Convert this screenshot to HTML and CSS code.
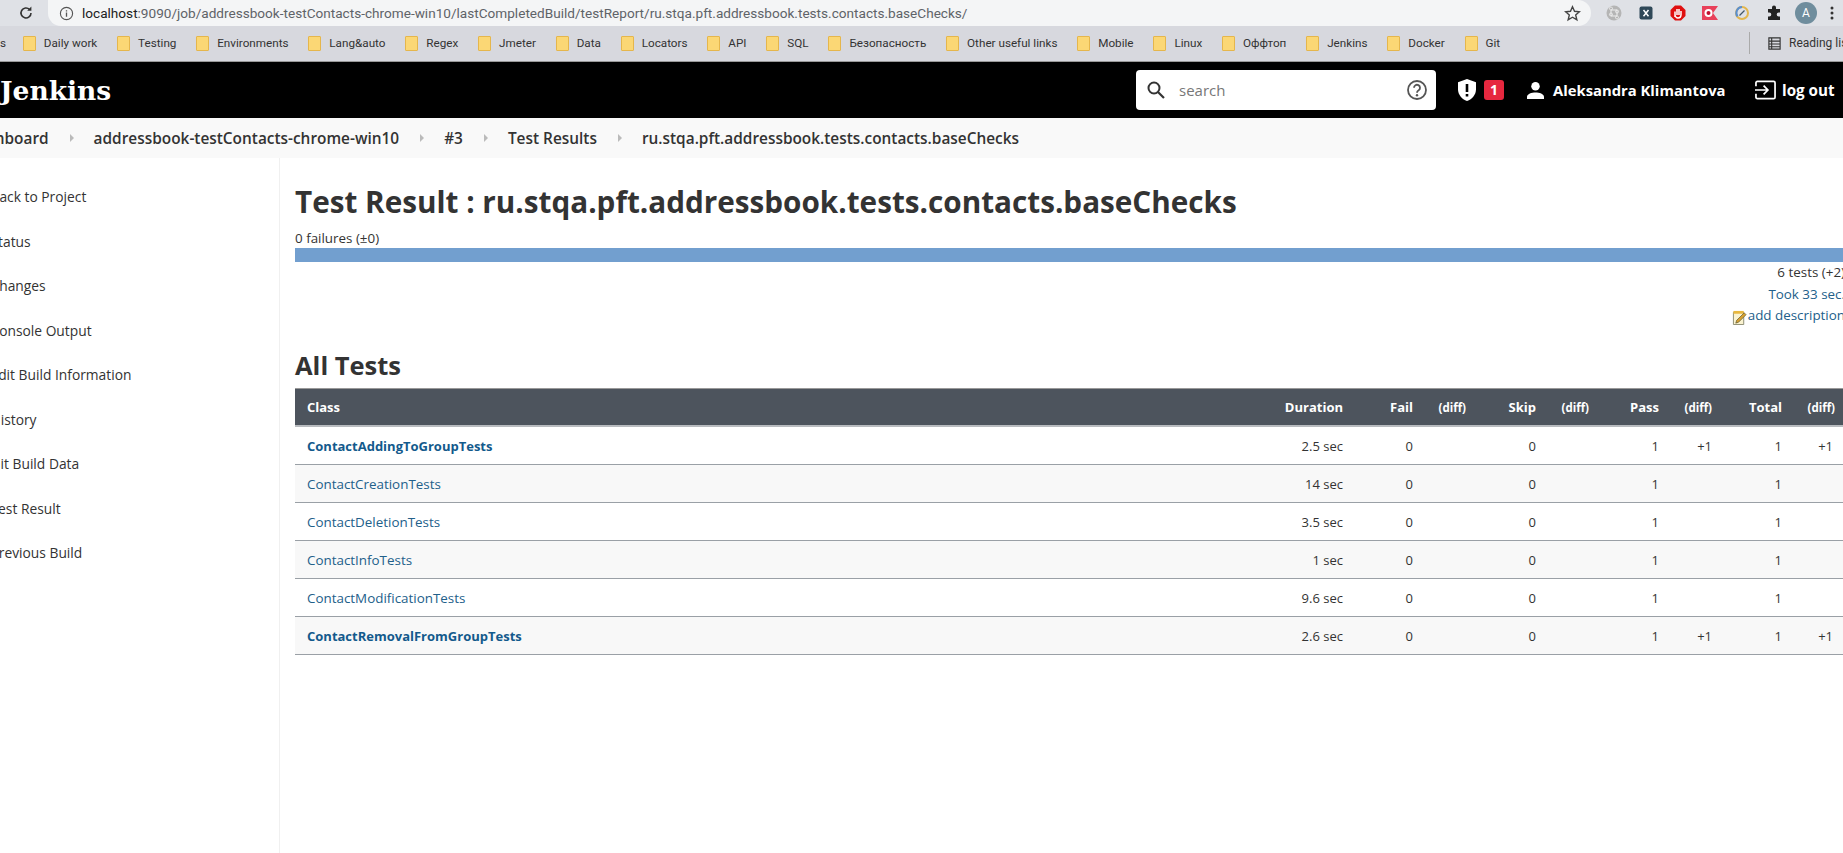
FILE: index.html
```html
<!DOCTYPE html>
<html>
<head>
<meta charset="utf-8">
<title>Test Result</title>
<link rel="stylesheet" href="styles.css">
</head>
<body>

<div class="toolbar">
	<svg class="reload" viewBox="0 0 16 16"><path d="M13 8a5 5 0 1 1-1.5-3.6" fill="none" stroke="#333" stroke-width="1.6"/><path d="M13.4 1.6v4.2H9.2z" fill="#333"/></svg>
	<div class="address">
		<svg class="info" viewBox="0 0 16 16"><circle cx="8" cy="8" r="6.5" fill="none" stroke="#555" stroke-width="1.2"/><path d="M8 7v4.4M8 4.4v1.4" stroke="#555" stroke-width="1.4"/></svg>
		<span class="host">localhost</span><span class="path">:9090/job/addressbook-testContacts-chrome-win10/lastCompletedBuild/testReport/ru.stqa.pft.addressbook.tests.contacts.baseChecks/</span>
		<svg class="star" viewBox="0 0 16 16"><path d="M8 1.6l1.9 4.3 4.6.4-3.5 3 1.1 4.6L8 11.5l-4.1 2.4L5 9.300l-3.500-3 4.600-.4z" fill="none" stroke="#444" stroke-width="1.300"/></svg>
	</div>
	<div class="exts">
		<svg class="ext" viewBox="0 0 16 16"><circle cx="8" cy="8" r="7.500" fill="#b5b5b5"/><path d="M5 5h6v6H5zM5 5a1.500 1.500 0 1 0-.1 0M11 5a1.500 1.500 0 1 0 .1 0M5 11a1.500 1.500 0 1 0-.1 0M11 11a1.500 1.500 0 1 0 .1 0" fill="none" stroke="#eee" stroke-width="1"/></svg>
		<svg class="ext" viewBox="0 0 16 16"><rect x="1.500" y="1.500" width="13" height="13" rx="2" fill="#2f4858"/><path d="M5.500 5l5 6.200M10.500 5l-5 6.200" stroke="#fff" stroke-width="1.500"/></svg>
		<svg class="ext" viewBox="0 0 16 16"><path d="M5 .5h6L15.500 5v6L11 15.500H5L.5 11V5z" fill="#e01010"/><path d="M5 12V6.500M7 10V4M9 10V4M11 10V6M5 9.500c0 2 1.500 3.500 3 3.500s3-1 3-3.500" fill="none" stroke="#fff" stroke-width="1.500"/></svg>
		<svg class="ext" viewBox="0 0 16 16"><path d="M0 1h16l-5 7 5 7H0z" fill="#e8405a"/><circle cx="6.500" cy="8" r="4" fill="#fff"/><circle cx="6.500" cy="8" r="2" fill="#c01030"/></svg>
		<svg class="ext" viewBox="0 0 16 16"><circle cx="8" cy="8" r="6" fill="none" stroke="#e3b64c" stroke-width="2"/><path d="M3.500 11.500A6 6 0 0 1 8 2" fill="none" stroke="#5a8fd0" stroke-width="2"/><path d="M5.500 10.500L10.500 5.500" stroke="#456" stroke-width="1.300"/></svg>
		<svg class="ext" viewBox="0 0 16 16"><path d="M6 2.500a2 2 0 0 1 4 0V4h4v3.500h-1.300a2 2 0 0 0 0 4H14V15H2v-3.500h1.300a2 2 0 0 0 0-4H2V4h4z" fill="#222"/></svg>
		<div class="avatar">A</div>
		<svg class="dots" viewBox="0 0 4 16"><circle cx="2" cy="3" r="1.500"/><circle cx="2" cy="8" r="1.500"/><circle cx="2" cy="13" r="1.500"/></svg>
	</div>
</div>

<div class="bookmarks">
	<span class="bm-cut">s</span>
	<span class="bm"><i class="folder"></i>Daily work</span>
	<span class="bm"><i class="folder"></i>Testing</span>
	<span class="bm"><i class="folder"></i>Environments</span>
	<span class="bm"><i class="folder"></i>Lang&amp;auto</span>
	<span class="bm"><i class="folder"></i>Regex</span>
	<span class="bm"><i class="folder"></i>Jmeter</span>
	<span class="bm"><i class="folder"></i>Data</span>
	<span class="bm"><i class="folder"></i>Locators</span>
	<span class="bm"><i class="folder"></i>API</span>
	<span class="bm"><i class="folder"></i>SQL</span>
	<span class="bm"><i class="folder"></i>Безопасность</span>
	<span class="bm"><i class="folder"></i>Other useful links</span>
	<span class="bm"><i class="folder"></i>Mobile</span>
	<span class="bm"><i class="folder"></i>Linux</span>
	<span class="bm"><i class="folder"></i>Оффтоп</span>
	<span class="bm"><i class="folder"></i>Jenkins</span>
	<span class="bm"><i class="folder"></i>Docker</span>
	<span class="bm"><i class="folder"></i>Git</span>
	<span class="reading">
		<svg class="reading-icon" viewBox="0 0 16 16"><path d="M2 2h12v12H2zM5 2v12M2 5.500h12M2 8.500h12M2 11.500h12" fill="none" stroke="#333" stroke-width="1.200"/></svg>
		Reading list
	</span>
</div>

<header class="page-header">
	<div class="logo">Jenkins</div>
	<div class="search">
		<svg class="search-icon" viewBox="0 0 18 18"><circle cx="7" cy="7" r="5.500" fill="none" stroke="#333" stroke-width="2"/><path d="M11 11l6 6" stroke="#333" stroke-width="2.200"/></svg>
		<span class="search-text">search</span>
		<svg class="help-icon" viewBox="0 0 20 20"><circle cx="10" cy="10" r="9" fill="none" stroke="#555" stroke-width="1.800"/><path d="M7 7.800a3 3 0 1 1 4.600 2.500c-1 .6-1.600 1.200-1.600 2.400" fill="none" stroke="#555" stroke-width="1.800"/><circle cx="10" cy="15.200" r="1.200" fill="#555"/></svg>
	</div>
	<svg class="shield" viewBox="0 0 18 22"><path d="M9 0l9 3.200v7c0 5.500-3.800 9.800-9 11.800-5.200-2-9-6.300-9-11.800v-7z" fill="#fff"/><path d="M9 5v8M9 15v2.500" stroke="#000" stroke-width="2.600"/></svg>
	<span class="badge">1</span>
	<svg class="user-icon" viewBox="0 0 18 18"><circle cx="9" cy="4.500" r="4.500" fill="#fff"/><path d="M0 18v-2.500C0 12.500 5 11 9 11s9 1.500 9 4.500V18z" fill="#fff"/></svg>
	<span class="user-name">Aleksandra Klimantova</span>
	<svg class="logout-icon" viewBox="0 0 22 20"><path d="M1 6V2.500A1.500 1.500 0 0 1 2.500 1h17A1.500 1.500 0 0 1 21 2.500v15a1.500 1.500 0 0 1-1.500 1.500h-17A1.500 1.500 0 0 1 1 17.500V14" fill="none" stroke="#fff" stroke-width="1.800"/><path d="M0 10h13M9 5.500l4.500 4.500L9 14.500" fill="none" stroke="#fff" stroke-width="1.800"/></svg>
	<span class="logout">log out</span>
</header>

<nav class="crumbs">
	<span class="crumb">Dashboard</span><i class="sep"></i>
	<span class="crumb">addressbook-testContacts-chrome-win10</span><i class="sep"></i>
	<span class="crumb">#3</span><i class="sep"></i>
	<span class="crumb">Test Results</span><i class="sep"></i>
	<span class="crumb">ru.stqa.pft.addressbook.tests.contacts.baseChecks</span>
</nav>

<section class="main">
	<ul class="side">
		<li>Back to Project</li>
		<li>Status</li>
		<li>Changes</li>
		<li>Console Output</li>
		<li>Edit Build Information</li>
		<li>History</li>
		<li>Git Build Data</li>
		<li>Test Result</li>
		<li>Previous Build</li>
	</ul>
	<div class="content">
		<h1>Test Result : ru.stqa.pft.addressbook.tests.contacts.baseChecks</h1>
		<div class="failures">0 failures (±0)</div>
		<div class="bar"></div>
		<div class="summary">
			<div>6 tests (+2)</div>
			<div><a href="#">Took 33 sec.</a></div>
			<div class="desc">
				<svg class="note" viewBox="0 0 16 16"><path d="M1.500 2.500h11v13h-11z" fill="#fbf3d0" stroke="#8a8a70"/><path d="M1.500 1h11v3h-11z" fill="#e8b840"/><path d="M5 11l8-8 2 2-8 8-3 1z" fill="#d8a030" stroke="#553" stroke-width=".7"/></svg>
				<a href="#">add description</a>
			</div>
		</div>
		<h2>All Tests</h2>
		<table class="tests">
			<colgroup>
				<col class="col-class"><col class="col-dur">
				<col class="col-num"><col class="col-diff">
				<col class="col-num"><col class="col-diff">
				<col class="col-num"><col class="col-diff">
				<col class="col-num"><col class="col-diff">
			</colgroup>
			<thead>
				<tr><th class="left">Class</th><th>Duration</th><th>Fail</th><th class="diff">(diff)</th><th>Skip</th><th class="diff">(diff)</th><th>Pass</th><th class="diff">(diff)</th><th>Total</th><th class="diff">(diff)</th></tr>
			</thead>
			<tbody>
				<tr><td class="left"><a class="new" href="#">ContactAddingToGroupTests</a></td><td>2.5 sec</td><td>0</td><td></td><td>0</td><td></td><td>1</td><td>+1</td><td>1</td><td>+1</td></tr>
				<tr><td class="left"><a href="#">ContactCreationTests</a></td><td>14 sec</td><td>0</td><td></td><td>0</td><td></td><td>1</td><td></td><td>1</td><td></td></tr>
				<tr><td class="left"><a href="#">ContactDeletionTests</a></td><td>3.5 sec</td><td>0</td><td></td><td>0</td><td></td><td>1</td><td></td><td>1</td><td></td></tr>
				<tr><td class="left"><a href="#">ContactInfoTests</a></td><td>1 sec</td><td>0</td><td></td><td>0</td><td></td><td>1</td><td></td><td>1</td><td></td></tr>
				<tr><td class="left"><a href="#">ContactModificationTests</a></td><td>9.6 sec</td><td>0</td><td></td><td>0</td><td></td><td>1</td><td></td><td>1</td><td></td></tr>
				<tr><td class="left"><a class="new" href="#">ContactRemovalFromGroupTests</a></td><td>2.6 sec</td><td>0</td><td></td><td>0</td><td></td><td>1</td><td>+1</td><td>1</td><td>+1</td></tr>
			</tbody>
		</table>
	</div>
</section>

</body>
</html>
```

FILE: styles.css
```css
html, body {
	margin: 0;
	height: 100%;
	overflow: hidden;
}
body {
	width: 1843px;
	font-family: "Open Sans", "Noto Sans", sans-serif;
	font-size: 13px;
	color: #333;
	background: #fff;
	display: flex;
	flex-direction: column;
}
a {
	color: #22608a;
	text-decoration: none;
}

/* browser chrome */
.toolbar {
	height: 26px;
	background: #dfe1e6;
	display: flex;
	align-items: center;
	flex: none;
}
.reload {
	width: 16px;
	height: 16px;
	margin: 0 14px 0 18px;
}
.address {
	width: 1543px;
	height: 26px;
	background: #f4f5f6;
	border-radius: 0 13px 13px 0;
	border-bottom-left-radius: 13px;
	display: flex;
	align-items: center;
	font-family: "Roboto", sans-serif;
	font-size: 13.600px;
	box-sizing: border-box;
	padding-left: 11px;
	white-space: nowrap;
}
.info {
	width: 15px;
	height: 15px;
	margin-right: 8px;
}
.host {
	color: #222;
}
.path {
	color: #5f6368;
}
.star {
	width: 17px;
	height: 17px;
	margin-left: auto;
	margin-right: 10px;
}
.exts {
	flex: 1;
	display: flex;
	align-items: center;
	padding-left: 15px;
	gap: 16px;
}
.ext {
	width: 16px;
	height: 16px;
	flex: none;
}
.avatar {
	width: 22px;
	height: 22px;
	border-radius: 50%;
	background: #6f8d9d;
	color: #fff;
	font-family: "Roboto", sans-serif;
	font-size: 12px;
	display: flex;
	align-items: center;
	justify-content: center;
	margin-left: -3px;
	flex: none;
}
.dots {
	width: 4px;
	height: 16px;
	fill: #333;
	margin-left: -3px;
	flex: none;
}

.bookmarks {
	height: 34px;
	padding-bottom: 1px;
	background: #d7d8de;
	border-bottom: 1px solid #999;
	display: flex;
	align-items: center;
	font-family: "Roboto", sans-serif;
	font-size: 11.700px;
	color: #333;
	white-space: nowrap;
	flex: none;
	gap: 19.800px;
}
.bm-cut {
	width: 3px;
}
.bm {
	display: flex;
	align-items: center;
	gap: 8px;
}
.folder {
	width: 13px;
	height: 15px;
	background: #fbd775;
	border: 1px solid #e5b64c;
	border-radius: 1px;
	box-sizing: border-box;
}
.reading {
	margin-left: auto;
	display: flex;
	align-items: center;
	gap: 7px;
	width: 76px;
	height: 22px;
	border-left: 1px solid #aaa;
	padding-left: 17px;
	font-size: 12px;
}
.reading-icon {
	width: 15px;
	height: 15px;
	flex: none;
}

/* jenkins header */
.page-header {
	height: 56px;
	background: #000;
	color: #fff;
	display: flex;
	align-items: center;
	flex: none;
	font-weight: 700;
	font-size: 14.800px;
}
.logo {
	font-family: "DejaVu Serif", serif;
	font-size: 26.500px;
	font-weight: 700;
	width: 1136px;
	flex: none;
}
.search {
	width: 300px;
	height: 40px;
	background: #fff;
	border-radius: 4px;
	display: flex;
	align-items: center;
	box-sizing: border-box;
	padding: 0 9px 0 11px;
}
.search-icon {
	width: 18px;
	height: 18px;
}
.search-text {
	color: #777;
	font-size: 15px;
	font-weight: 400;
	margin-left: 14px;
}
.help-icon {
	width: 20px;
	height: 20px;
	margin-left: auto;
}
.shield {
	width: 18px;
	height: 22px;
	margin-left: 22px;
}
.badge {
	width: 20px;
	height: 20px;
	background: #e6283f;
	border-radius: 3px;
	font-size: 14px;
	text-align: center;
	line-height: 20px;
	margin-left: 8px;
}
.user-icon {
	width: 17px;
	height: 17px;
	margin-left: 23px;
}
.user-name {
	margin-left: 9px;
	width: 172px;
	white-space: nowrap;
}
.logout-icon {
	width: 21px;
	height: 20px;
	margin-left: 30px;
}
.logout {
	margin-left: 6px;
	font-size: 15.200px;
	white-space: nowrap;
}

/* breadcrumb */
.crumbs {
	height: 40px;
	background: #f9f9f9;
	display: flex;
	align-items: center;
	flex: none;
	font-size: 15.400px;
	font-weight: 600;
	color: #333;
	white-space: nowrap;
	margin-left: -33px;
	width: 1876px;
}
.sep {
	width: 0;
	height: 0;
	border-left: 4px solid #bbb;
	border-top: 4px solid transparent;
	border-bottom: 4px solid transparent;
	margin: 0 20px 0 21px;
}

/* page */
.main {
	display: flex;
	flex: 1;
	min-height: 0;
}
.side {
	list-style-type: none;
	margin: 0;
	padding: 17px 0 0;
	width: 279px;
	border-right: 1px solid #f0f0f0;
	flex: none;
	font-size: 13.800px;
	font-weight: 500;
	color: #333;
	overflow: hidden;
}
.side li {
	height: 44.500px;
	line-height: 44.500px;
	white-space: nowrap;
	margin-left: -9.500px;
}
.content {
	width: 1550px;
	flex: none;
	margin-left: 15px;
}
h1 {
	margin: 24px 0 0;
	font-size: 29.700px;
	line-height: 40px;
	font-weight: 700;
	white-space: nowrap;
}
.failures {
	line-height: 18px;
	margin-top: 7px;
	font-size: 13.400px;
}
.bar {
	height: 14px;
	background: #729fcf;
	margin-top: 1px;
}
.summary {
	text-align: right;
	line-height: 21.500px;
	white-space: nowrap;
	font-size: 13.400px;
}
.desc {
	display: flex;
	justify-content: flex-end;
	align-items: center;
}
.note {
	width: 15px;
	height: 15px;
	margin: 3px 1px 0 0;
}
h2 {
	margin: 21px 0 6px;
	font-size: 25.500px;
	line-height: 34px;
	font-weight: 700;
}
.tests {
	width: 1550px;
	table-layout: fixed;
	border-collapse: separate;
	border-spacing: 0;
}
.col-class { width: 960px; }
.col-dur { width: 100px; }
.col-num { width: 70px; }
.col-diff { width: 53px; }
th, td {
	height: 38px;
	box-sizing: border-box;
	padding: 1px 12px 0;
	text-align: right;
	white-space: nowrap;
}
th {
	height: 39px;
	background: #4d545d;
	color: #fff;
	font-size: 13px;
	font-weight: 700;
	border-top: 1px solid #999;
	border-bottom: 2px solid #b8bbbf;
}
th.diff {
	font-size: 11.500px;
}
td {
	border-bottom: 1px solid #9aa0a6;
}
td:last-child {
	padding-right: 14px;
}
tbody tr:nth-child(even) td {
	background: #f8f8f8;
}
td a {
	font-size: 13.400px;
}
.left {
	text-align: left;
}
td a.new {
	font-size: 13px;
	font-weight: 700;
	color: #135a8c;
}
```
